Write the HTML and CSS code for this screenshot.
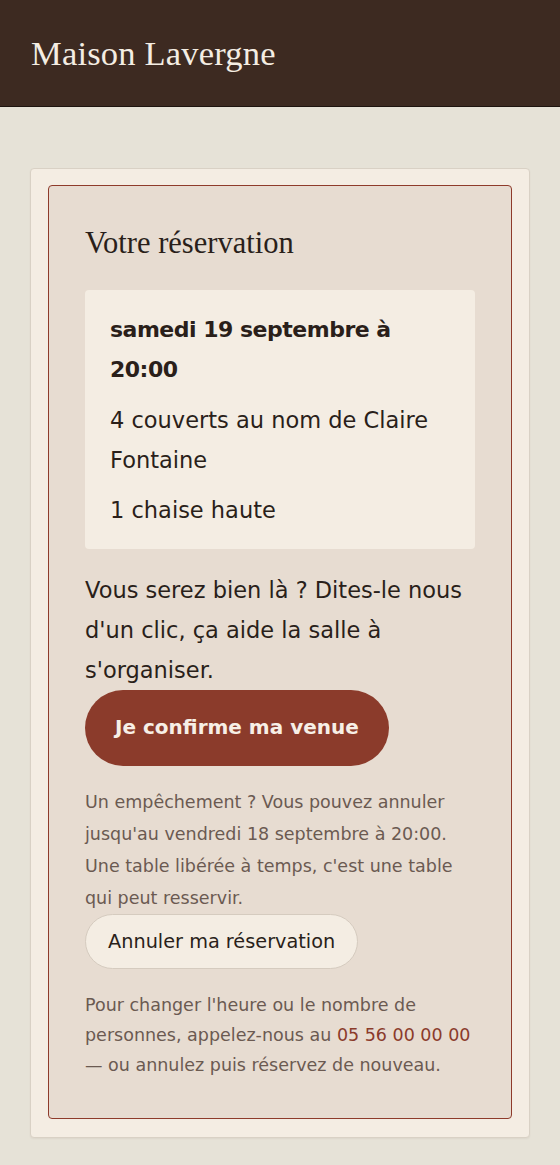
FILE: index.html
```html
<!DOCTYPE html>
<html lang="fr">
<head>
<meta charset="utf-8">
<title>Maison Lavergne</title>
<link rel="stylesheet" href="styles.css">
</head>
<body>
<header class="site-header">
  <h1 class="brand">Maison Lavergne</h1>
</header>
<main class="page">
  <section class="card">
    <div class="panel">
      <h2 class="panel-title">Votre réservation</h2>
      <div class="details">
        <p class="details-date">samedi 19 septembre à 20:00</p>
        <p class="details-line">4 couverts au nom de Claire Fontaine</p>
        <p class="details-line">1 chaise haute</p>
      </div>
      <p class="lead">Vous serez bien là ? Dites-le nous d'un clic, ça aide la salle à s'organiser.</p>
      <button class="btn btn-primary" type="button">Je confirme ma venue</button>
      <p class="note note-cancel">Un empêchement ? Vous pouvez annuler jusqu'au vendredi 18 septembre à 20:00. Une table libérée à temps, c'est une table qui peut resservir.</p>
      <button class="btn btn-secondary" type="button">Annuler ma réservation</button>
      <p class="note note-change">Pour changer l'heure ou le nombre de personnes, appelez-nous au <a class="phone" href="tel:0556000000">05&nbsp;56&nbsp;00&nbsp;00&nbsp;00</a> — ou annulez puis réservez de nouveau.</p>
    </div>
  </section>
</main>
</body>
</html>
```

FILE: styles.css
```css
* { box-sizing: border-box; }

html, body {
  margin: 0;
  padding: 0;
}

body {
  background: #e6e2d7;
  color: #2a1f1a;
  font-family: "DejaVu Sans", "Open Sans", sans-serif;
}

.site-header {
  background: #3d2a21;
  height: 107px;
  border-bottom: 1px solid #1e140f;
  display: flex;
  align-items: center;
  padding: 0 31px;
}

.brand {
  margin: 0;
  font-family: "Liberation Serif", serif;
  font-weight: 400;
  font-size: 34.5px;
  line-height: 40px;
  color: #f4ede3;
  letter-spacing: 0.2px;
}

.page {
  padding: 61px 30px 28px;
}

.card {
  background: #f4ede3;
  border: 1px solid #d9d1c5;
  border-radius: 4px;
  padding: 16px 17px 18px;
  box-shadow: 0 1px 2px rgba(60, 40, 30, 0.06);
}

.panel {
  background: #e7dcd1;
  border: 1px solid #8e3b2b;
  border-radius: 4px;
  padding: 39px 36px 38px;
}

.panel-title {
  margin: 0 0 29px;
  font-family: "Liberation Serif", serif;
  font-weight: 400;
  font-size: 30.5px;
  line-height: 36px;
  color: #2a1f1a;
}

.details {
  background: #f4ede3;
  border-radius: 4px;
  padding: 20px 25px 19px;
}

.details p {
  margin: 0;
  font-size: 22.5px;
  line-height: 40px;
}

.details p + p {
  margin-top: 10px;
}

.details .details-date {
  font-weight: 700;
  font-size: 22px;
  letter-spacing: -0.5px;
}

.lead {
  margin: 21px 0 0;
  font-size: 22.5px;
  line-height: 40px;
}

.btn {
  display: inline-block;
  border-radius: 999px;
  font-family: inherit;
  cursor: pointer;
}

.btn-primary {
  background: #8b3b2b;
  color: #f7efe6;
  border: none;
  font-weight: 700;
  font-size: 20px;
  line-height: 36px;
  padding: 19px 30px 21px;
}

.note {
  color: #6b5a51;
  font-size: 17.5px;
  margin: 0;
}

.note-cancel {
  margin-top: 20px;
  line-height: 32px;
}

.btn-secondary {
  background: #f4ede3;
  color: #2a1f1a;
  border: 1px solid #d5cbbf;
  font-weight: 400;
  font-size: 19.3px;
  line-height: 27px;
  padding: 13px 22px;
}

.note-change {
  margin-top: 21px;
  line-height: 30px;
}

.phone {
  color: #8b3b2b;
  text-decoration: none;
}
```
